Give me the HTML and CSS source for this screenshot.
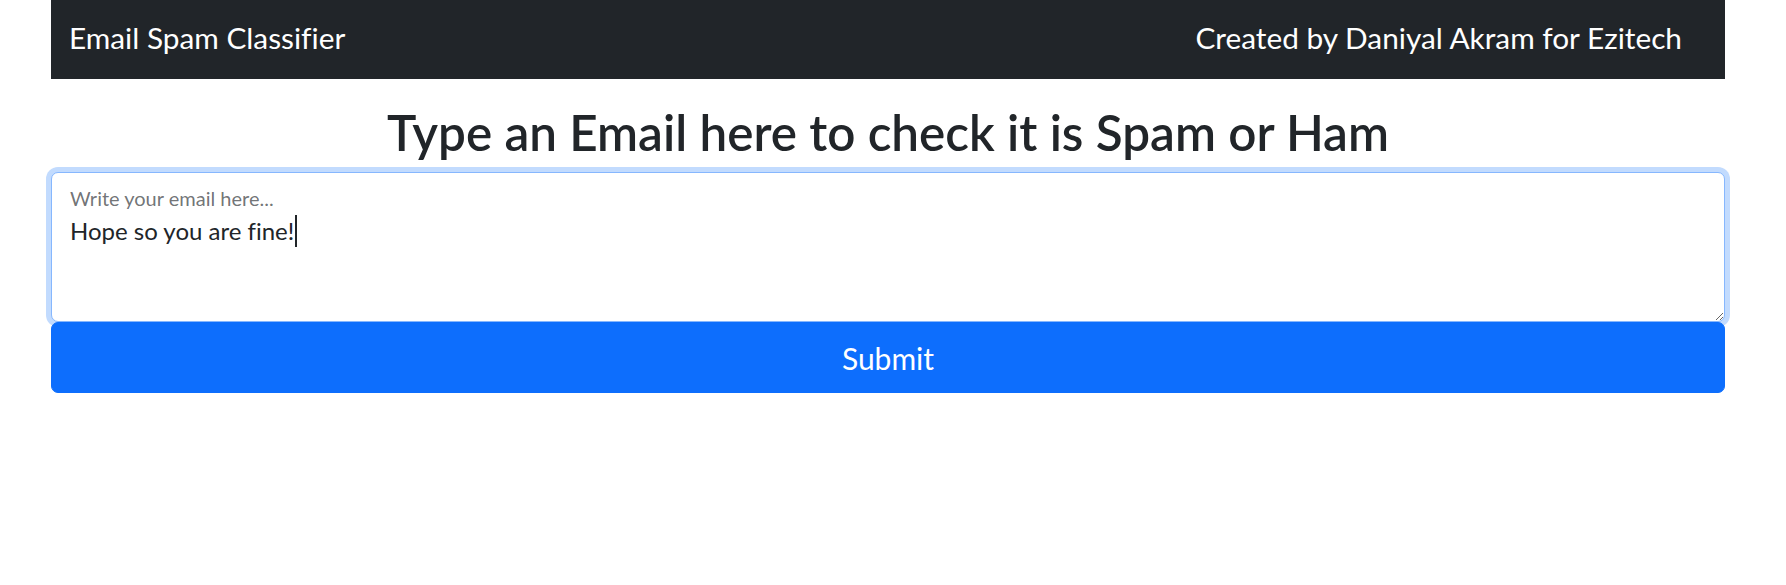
FILE: index.html
```html
<!DOCTYPE html>
<html lang="en">
<head>
<meta charset="utf-8">
<title>Email Spam Classifier</title>
<link rel="stylesheet" href="styles.css">
</head>
<body>
<div class="page">
  <nav class="navbar">
    <span class="brand">Email Spam Classifier</span>
    <span class="credit">Created by Daniyal Akram for Ezitech</span>
  </nav>
  <h1 class="title">Type an Email here to check it is Spam or Ham</h1>
  <form class="form">
    <div class="floating">
      <textarea id="email" class="field is-focused">Hope so you are fine!</textarea>
      <label for="email" class="float-label">Write your email here...</label>
      <span class="caret" aria-hidden="true"></span>
    </div>
    <button type="button" class="submit">Submit</button>
  </form>
</div>
</body>
</html>
```
FILE: styles.css
```css
* { box-sizing: border-box; }
body {
  margin: 0;
  font-family: "Lato", "Liberation Sans", sans-serif;
  font-variant-ligatures: no-common-ligatures;
  color: #212529;
  background: #fff;
}
.page {
  width: 1674px;
  margin-left: 51px;
}
.navbar {
  height: 79px;
  background: #212529;
  color: #fff;
  display: flex;
  justify-content: space-between;
  align-items: flex-start;
  padding: 15px 43px 0 18px;
  font-size: 29.8px;
  line-height: 45px;
}
.title {
  margin: 24px 0 0;
  text-align: center;
  font-size: 49.4px;
  font-weight: 600;
  line-height: 1.2;
  height: 69px;
}
.form {
  display: flex;
  flex-direction: column;
}
.floating {
  position: relative;
}
.field {
  display: block;
  width: 100%;
  height: 150px;
  margin: 0;
  padding: 40px 18px 10px 18px;
  font-family: inherit;
  font-variant-ligatures: no-common-ligatures;
  font-size: 24px;
  line-height: 36px;
  color: #212529;
  background: #fff;
  border: 1px solid #dee2e6;
  border-radius: 7px;
  resize: vertical;
  outline: none;
}
.field.is-focused {
  border-color: #86b7fe;
  box-shadow: 0 0 0 5px rgba(13, 110, 253, 0.25);
}
.float-label {
  position: absolute;
  top: 11px;
  left: 19px;
  font-size: 20px;
  line-height: 30px;
  color: rgba(33, 37, 41, 0.65);
  pointer-events: none;
}
.caret {
  position: absolute;
  top: 43px;
  left: 244px;
  width: 2px;
  height: 32px;
  background: #212529;
  pointer-events: none;
}
.submit {
  display: block;
  width: 100%;
  height: 71px;
  margin: 0;
  padding: 13px 0;
  font-family: inherit;
  font-size: 30px;
  line-height: 45px;
  color: #fff;
  background: #0d6efd;
  border: 1px solid #0d6efd;
  border-radius: 7px;
  cursor: pointer;
}
```
